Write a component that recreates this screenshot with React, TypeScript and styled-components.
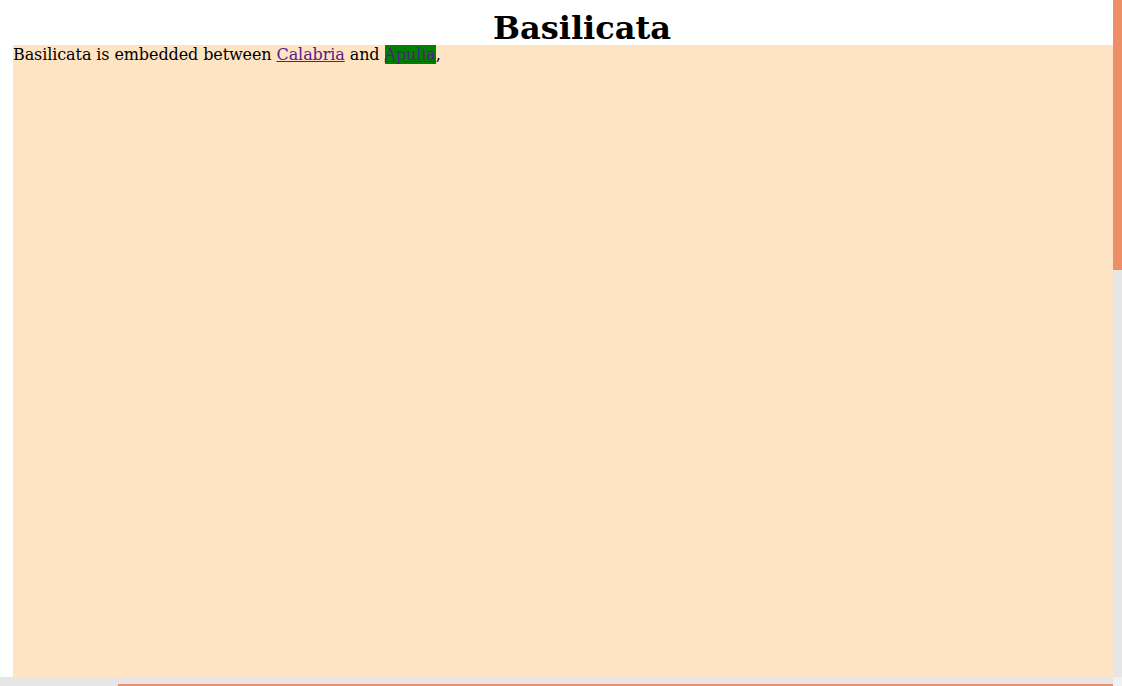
import React from 'react'
import styled, { createGlobalStyle } from 'styled-components'

const GlobalStyle = createGlobalStyle`
  html, body {
    margin: 0;
    padding: 0;
    height: 100%;
    overflow: hidden;
    background: #ffffff;
  }
  #root {
    height: 100%;
  }
`

// window frame: page area plus the two scroll bars and their corner
const Frame = styled.div`
  width: 100vw;
  height: 100vh;
  display: grid;
  grid-template-columns: 1fr 9px;
  grid-template-rows: 1fr 9px;
  font-family: 'DejaVu Serif', 'Liberation Serif', serif;
  color: #000;
`

const Page = styled.div`
  overflow: hidden;
  padding-left: 13px;
  display: flex;
  flex-direction: column;
  min-height: 0;
`

const Title = styled.h1`
  margin: 0;
  padding: 9px 0 0 38px;
  height: 45px;
  flex: none;
  box-sizing: border-box;
  font-size: 32px;
  font-weight: bold;
  text-align: center;
  line-height: normal;
  white-space: nowrap;
`

const Region = styled.div`
  flex: 1;
  background: #ffe4c4;
  font-size: 16px;
  line-height: normal;
  letter-spacing: -0.1px;
`

const Link = styled.a<{ $marked?: boolean }>`
  color: #551a8b;
  text-decoration: underline;
  background: ${props => (props.$marked ? '#008000' : 'transparent')};
  cursor: pointer;
`

const VTrack = styled.div`
  background: #e6e6e6;
  display: flex;
  flex-direction: column;
`

const VThumb = styled.div`
  height: 270px;
  background: #ee8e66;
`

const HTrack = styled.div`
  background: #e6e6e6;
  display: flex;
  align-items: flex-end;
  padding-left: 118px;
`

const HThumb = styled.div`
  flex: 1;
  height: 2px;
  background: #ee8e66;
`

const Corner = styled.div`
  background: #f1f1f1;
`

export default function App() {
  return (
    <>
      <GlobalStyle />
      <Frame>
        <Page>
          <Title>Basilicata</Title>
          <Region>
            Basilicata is embedded between <Link href="#calabria">Calabria</Link> and{' '}
            <Link href="#apulia" $marked>Apulia</Link>,
          </Region>
        </Page>
        <VTrack>
          <VThumb />
        </VTrack>
        <HTrack>
          <HThumb />
        </HTrack>
        <Corner />
      </Frame>
    </>
  )
}
